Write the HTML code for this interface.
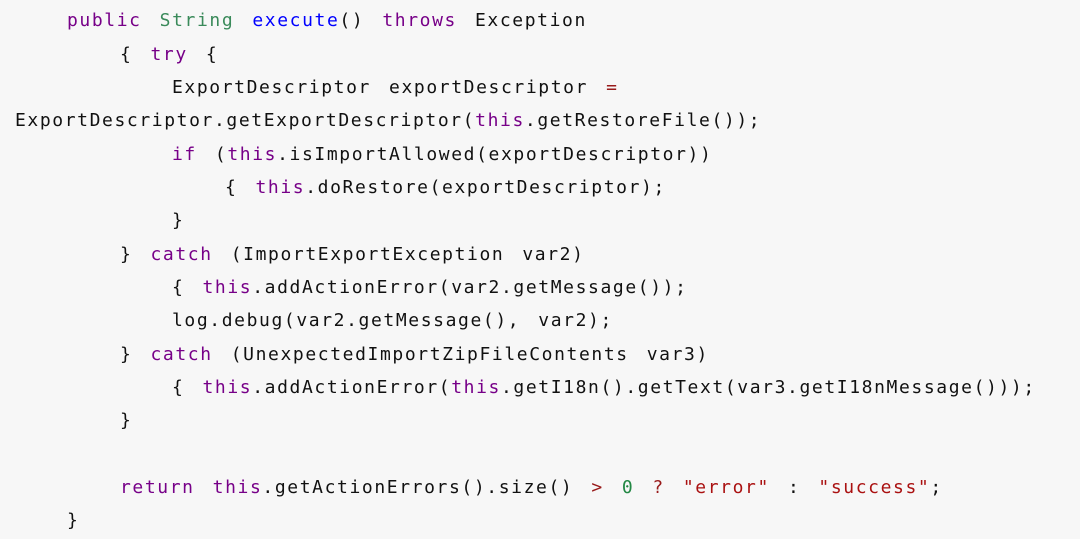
<!DOCTYPE html>
<html><head><meta charset="utf-8"><style>
html,body{margin:0;padding:0;background:#f7f7f7;width:1080px;height:539px;overflow:hidden}
.l{position:absolute;white-space:pre;font-family:"DejaVu Sans Mono","Liberation Mono",monospace;font-size:18px;letter-spacing:1.6px;word-spacing:5.6px;color:#111;height:33px;line-height:33px}
.k{color:#770088}.t{color:#3a8a5a}.d{color:#0000ff}.s{color:#a11}.o{color:#981a1a}.n{color:#228844}
</style></head><body>
<div class="l" style="left:67px;top:4px"><span class="k">public</span> <span class="t">String</span> <span class="d">execute</span>() <span class="k">throws</span> Exception</div>
<div class="l" style="left:120px;top:38px">{ <span class="k">try</span> {</div>
<div class="l" style="left:172px;top:71px">ExportDescriptor exportDescriptor <span class="o">=</span></div>
<div class="l" style="left:15px;top:104px">ExportDescriptor.getExportDescriptor(<span class="k">this</span>.getRestoreFile());</div>
<div class="l" style="left:172px;top:138px"><span class="k">if</span> (<span class="k">this</span>.isImportAllowed(exportDescriptor))</div>
<div class="l" style="left:225px;top:171px">{ <span class="k">this</span>.doRestore(exportDescriptor);</div>
<div class="l" style="left:172px;top:204px">}</div>
<div class="l" style="left:120px;top:238px">} <span class="k">catch</span> (ImportExportException var2)</div>
<div class="l" style="left:172px;top:271px">{ <span class="k">this</span>.addActionError(var2.getMessage());</div>
<div class="l" style="left:172px;top:304px">log.debug(var2.getMessage(), var2);</div>
<div class="l" style="left:120px;top:338px">} <span class="k">catch</span> (UnexpectedImportZipFileContents var3)</div>
<div class="l" style="left:172px;top:371px">{ <span class="k">this</span>.addActionError(<span class="k">this</span>.getI18n().getText(var3.getI18nMessage()));</div>
<div class="l" style="left:120px;top:404px">}</div>
<div class="l" style="left:120px;top:471px"><span class="k">return</span> <span class="k">this</span>.getActionErrors().size() <span class="o">&gt;</span> <span class="n">0</span> <span class="o">?</span> <span class="s">"error"</span> : <span class="s">"success"</span>;</div>
<div class="l" style="left:67px;top:504px">}</div>
</body></html>
